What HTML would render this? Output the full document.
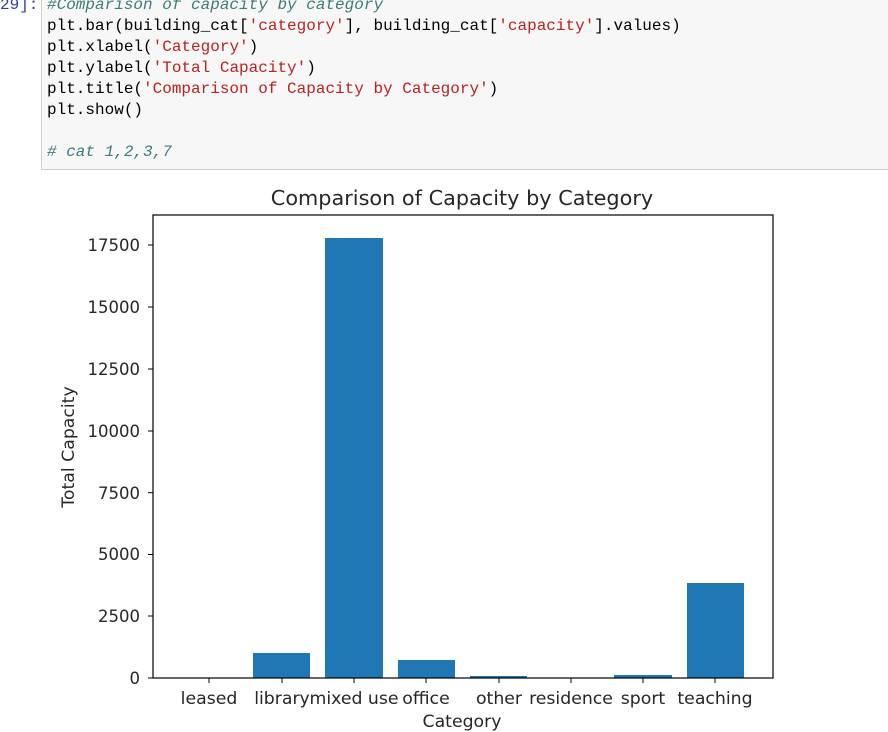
<!DOCTYPE html>
<html><head><style>
html,body{margin:0;padding:0;background:#fff;width:888px;height:732px;overflow:hidden;position:relative}
.prompt{position:absolute;left:0;top:-5px;font:16px/21px "Liberation Mono",monospace;color:#303f9f}
.cell{position:absolute;left:41px;top:-2px;width:860px;height:172px;background:#f7f7f7;border:1px solid #cfcfcf;box-sizing:border-box}
pre{position:absolute;left:47px;top:-5px;margin:0;font:16px/21px "Liberation Mono",monospace;color:#000}
.s{color:#ba2121}.c{color:#3d7b7b;font-style:italic}
svg{position:absolute;left:0;top:0}
svg text{font-family:"DejaVu Sans","Liberation Sans",sans-serif;fill:#262626}
</style></head><body>
<div class="prompt">29]:</div>
<div class="cell"></div>
<pre><span class="c">#Comparison of capacity by category</span>
plt.bar(building_cat[<span class="s">'category'</span>], building_cat[<span class="s">'capacity'</span>].values)
plt.xlabel(<span class="s">'Category'</span>)
plt.ylabel(<span class="s">'Total Capacity'</span>)
plt.title(<span class="s">'Comparison of Capacity by Category'</span>)
plt.show()

<span class="c"># cat 1,2,3,7</span></pre>
<svg width="888" height="732">
<g fill="#1f77b4">
<rect x="253" y="653" width="57" height="25"/>
<rect x="325" y="238" width="58" height="440"/>
<rect x="398" y="660" width="57" height="18"/>
<rect x="470" y="676" width="57" height="2"/>
<rect x="614" y="675" width="58" height="3"/>
<rect x="687" y="583" width="57" height="95"/>
</g>
<rect x="153" y="215" width="620" height="463" fill="none" stroke="#000" stroke-width="1.2"/>
<g stroke="#000" stroke-width="1">
<line x1="148" y1="678" x2="153" y2="678"/><line x1="148" y1="616" x2="153" y2="616"/><line x1="148" y1="554.5" x2="153" y2="554.5"/><line x1="148" y1="492.7" x2="153" y2="492.7"/><line x1="148" y1="431" x2="153" y2="431"/><line x1="148" y1="369" x2="153" y2="369"/><line x1="148" y1="307" x2="153" y2="307"/><line x1="148" y1="245" x2="153" y2="245"/>
<line x1="209" y1="678" x2="209" y2="683"/><line x1="282" y1="678" x2="282" y2="683"/><line x1="354" y1="678" x2="354" y2="683"/><line x1="426" y1="678" x2="426" y2="683"/><line x1="499" y1="678" x2="499" y2="683"/><line x1="571" y1="678" x2="571" y2="683"/><line x1="643" y1="678" x2="643" y2="683"/><line x1="715" y1="678" x2="715" y2="683"/>
</g>
<g font-size="16.5" text-anchor="end">
<text x="140" y="684">0</text><text x="140" y="622">2500</text><text x="140" y="560">5000</text><text x="140" y="499">7500</text><text x="140" y="437">10000</text><text x="140" y="375">12500</text><text x="140" y="313">15000</text><text x="140" y="251">17500</text>
</g>
<g font-size="17.3" text-anchor="middle">
<text x="209" y="704">leased</text><text x="282" y="704">library</text><text x="354" y="704">mixed use</text><text x="426" y="704">office</text><text x="499" y="704">other</text><text x="571" y="704">residence</text><text x="643" y="704">sport</text><text x="715" y="704">teaching</text>
<text x="462" y="727">Category</text>
<text x="462" y="205" font-size="20.8">Comparison of Capacity by Category</text>
<text transform="translate(74,447) rotate(-90)">Total Capacity</text>
</g>
</svg>
</body></html>
